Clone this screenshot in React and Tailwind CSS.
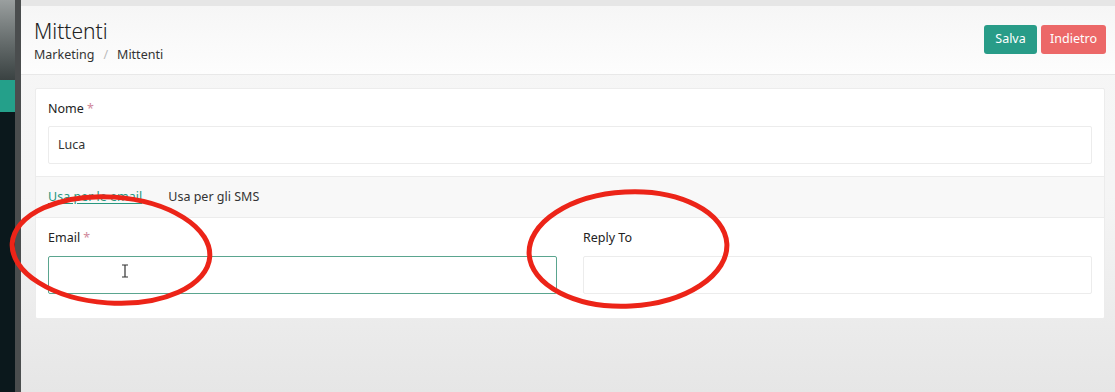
export default function App() {
  const font = { fontFamily: '"Noto Sans", "Open Sans", sans-serif' };
  return (
    <div className="relative w-[1115px] h-[392px] overflow-hidden flex bg-[#f3f3f3]" style={font}>
      {/* sidebar */}
      <div className="w-[15px] h-full flex flex-col bg-[#0b181c]">
        <div className="h-[80px] bg-gradient-to-b from-[#9a9f9f] to-[#3a4242]" />
        <div className="h-[32px] bg-[#24a08a]" />
        <div className="flex-1 bg-[#0b181c]" />
      </div>
      <div className="w-[6px] h-full bg-[#4a4d4e]" />
      {/* main */}
      <div className="flex-1 flex flex-col bg-gradient-to-b from-[#f6f6f6] via-[#f5f5f5] to-[#e6e6e6]">
        <div className="h-[6px] bg-[#e6e6e6]" />
        <div className="h-[69px] bg-gradient-to-b from-[#f6f6f6] to-[#fdfdfd] border-b border-[#e8e8e8] flex justify-between pl-[13px] pr-[9px]">
          <div className="pt-[12px]">
            <div className="text-[21px] leading-[26px] text-[#222] font-light">Mittenti</div>
            <div className="text-[12.5px] leading-[16px] mt-[3px] text-[#333] flex items-center">
              <span>Marketing</span>
              <span className="mx-[9px] text-[#bbb]">/</span>
              <span>Mittenti</span>
            </div>
          </div>
          <div className="flex gap-[4px] pt-[19px]">
            <button className="h-[29px] w-[53px] rounded-[3px] bg-[#289c88] text-white text-[12.5px]">Salva</button>
            <button className="h-[29px] w-[65px] rounded-[3px] bg-[#ec6868] text-white text-[12.5px]">Indietro</button>
          </div>
        </div>
        <div className="pt-[13px] pl-[14px] pr-[10px]">
          <div className="bg-white border border-[#ececec] rounded-[2px]">
            <div className="px-[12px] pt-[12px] pb-[12px]">
              <div className="text-[12.5px] leading-[16px] text-[#222] mb-[9px]">
                Nome <span className="text-[#d0889a]">*</span>
              </div>
              <div className="h-[38px] border border-[#ececec] rounded-[2px] flex items-center px-[9px] text-[12.5px] text-[#333]">Luca</div>
            </div>
            <div className="h-[42px] bg-[#f8f8f8] border-y border-[#ececec] flex items-center px-[12px] gap-[26px] text-[12.5px]">
              <span className="text-[#27977f] underline underline-offset-2">Usa per le email</span>
              <span className="text-[#333]">Usa per gli SMS</span>
            </div>
            <div className="grid grid-cols-2 gap-[26px] px-[12px] pt-[12px] pb-[24px]">
              <div>
                <div className="text-[12.5px] leading-[16px] text-[#222] mb-[10px]">
                  Email <span className="text-[#d0889a]">*</span>
                </div>
                <div className="h-[38px] border border-[#5aa58f] rounded-[2px]" />
              </div>
              <div>
                <div className="text-[12.5px] leading-[16px] text-[#222] mb-[10px]">Reply To</div>
                <div className="h-[38px] border border-[#ececec] rounded-[2px]" />
              </div>
            </div>
          </div>
        </div>
      </div>
      {/* annotation overlay */}
      <svg className="absolute inset-0 pointer-events-none" width="1115" height="392">
        <ellipse cx="111" cy="250" rx="99" ry="53" fill="none" stroke="#ec2418" strokeWidth="5" transform="rotate(4 111 250)" />
        <ellipse cx="628" cy="249" rx="99" ry="57" fill="none" stroke="#ec2418" strokeWidth="5" transform="rotate(-3 628 249)" />
        <path d="M122 265 h6 M125 265 v12 M122 277 h6" stroke="#333" strokeWidth="1.2" fill="none" />
      </svg>
    </div>
  );
}
